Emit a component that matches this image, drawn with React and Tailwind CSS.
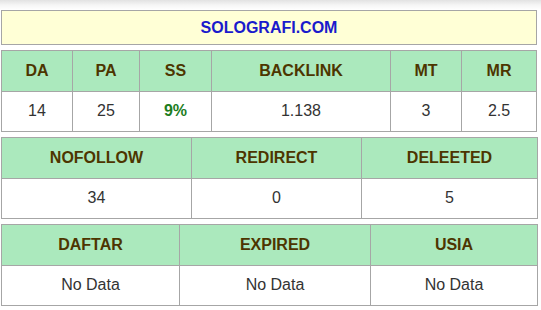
import React from 'react';

const rows = [
    {
        cols: ['w-[71px]', 'w-[67px]', 'w-[72px]', 'w-[179px]', 'w-[71px]', 'w-[75px]'],
        head: ['DA', 'PA', 'SS', 'BACKLINK', 'MT', 'MR'],
        data: ['14', '25', '9%', '1.138', '3', '2.5'],
    },
    {
        cols: ['w-[190px]', 'w-[170px]', 'w-[176px]'],
        head: ['NOFOLLOW', 'REDIRECT', 'DELEETED'],
        data: ['34', '0', '5'],
    },
    {
        cols: ['w-[178px]', 'w-[191px]', 'w-[167px]'],
        head: ['DAFTAR', 'EXPIRED', 'USIA'],
        data: ['No Data', 'No Data', 'No Data'],
    },
];

const StatTable = ({ cols, head, data }) => (
    <table className="w-[536px] border-collapse table-fixed">
        <colgroup>
            {cols.map((c, i) => <col key={i} className={c} />)}
        </colgroup>
        <thead>
            <tr className="bg-[#abe9bd]">
                {head.map(h => (
                    <th key={h} className="h-[40.5px] border border-[#a6a6a6] text-center text-[16px] font-bold text-[#4d3500] p-0">{h}</th>
                ))}
            </tr>
        </thead>
        <tbody>
            <tr className="bg-white">
                {data.map((d, i) => (
                    <td key={i} className={`h-[40.5px] border border-[#a6a6a6] text-center text-[16px] p-0 ${d === '9%' ? 'font-bold text-[#1d7d1d]' : 'text-[#333333]'}`}>{d}</td>
                ))}
            </tr>
        </tbody>
    </table>
);

const App = () => {
    return (
        <div className="w-[541px] h-[310px] bg-white overflow-hidden font-['Liberation_Sans',Arial,sans-serif]">
            <div className="h-[10px] bg-gradient-to-b from-[#e2e2e2] via-[#f5f5f5] to-white" />
            <div className="pl-px flex flex-col gap-[5px]">
                <div className="w-[536px] h-[35px] border border-[#a6a6a6] bg-[#ffffd6] flex items-center justify-center text-[16px] font-bold text-[#1a1acc]">
                    SOLOGRAFI.COM
                </div>
                {rows.map((r, i) => <StatTable key={i} {...r} />)}
            </div>
        </div>
    );
};

export default App;
